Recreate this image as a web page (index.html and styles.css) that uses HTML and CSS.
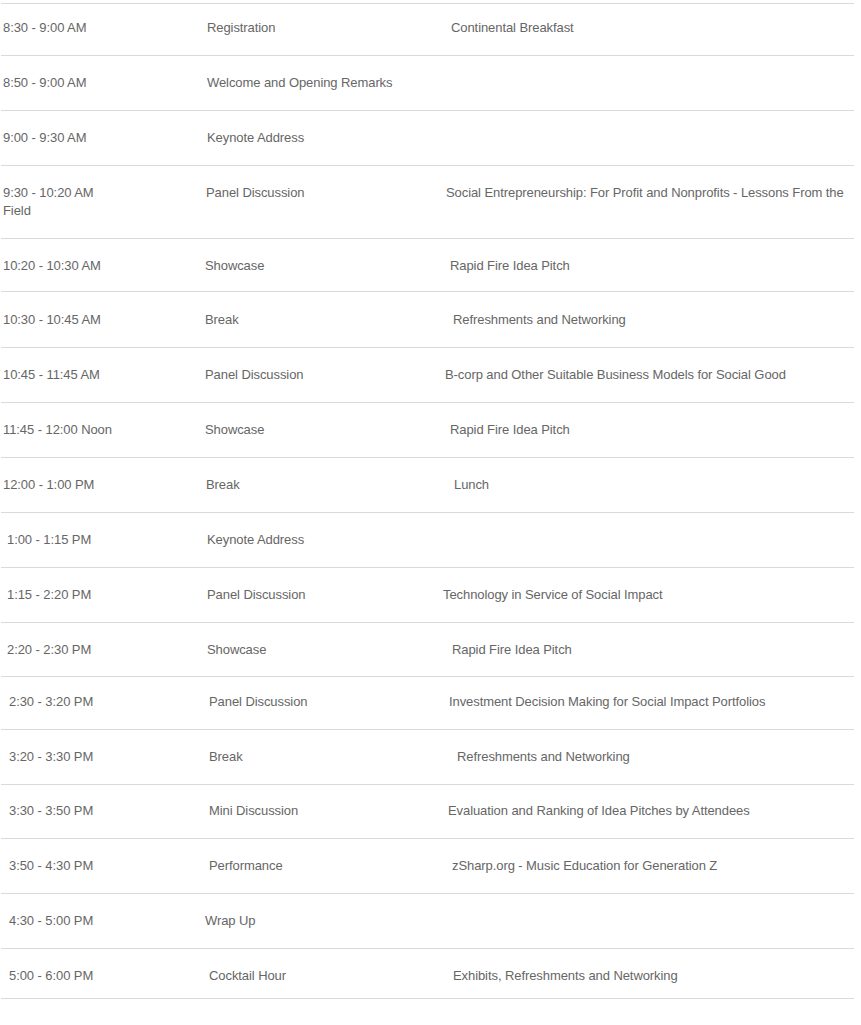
FILE: index.html
```html
<!DOCTYPE html>
<html lang="en">
<head>
<meta charset="utf-8">
<title>Schedule</title>
<link rel="stylesheet" href="styles.css">
</head>
<body>
<div class="schedule">
  <div class="row"><span class="time">8:30 - 9:00 AM</span><span class="track">Registration</span><span class="topic">Continental Breakfast</span></div>
  <div class="row"><span class="time">8:50 - 9:00 AM</span><span class="track">Welcome and Opening Remarks</span><span class="topic"></span></div>
  <div class="row"><span class="time">9:00 - 9:30 AM</span><span class="track">Keynote Address</span><span class="topic"></span></div>
  <div class="row"><span class="time">9:30 - 10:20 AM<br>Field</span><span class="track">Panel Discussion</span><span class="topic">Social Entrepreneurship: For Profit and Nonprofits - Lessons From the</span></div>
  <div class="row"><span class="time">10:20 - 10:30 AM</span><span class="track">Showcase</span><span class="topic">Rapid Fire Idea Pitch</span></div>
  <div class="row"><span class="time">10:30 - 10:45 AM</span><span class="track">Break</span><span class="topic">Refreshments and Networking</span></div>
  <div class="row"><span class="time">10:45 - 11:45 AM</span><span class="track">Panel Discussion</span><span class="topic">B-corp and Other Suitable Business Models for Social Good</span></div>
  <div class="row"><span class="time">11:45 - 12:00 Noon</span><span class="track">Showcase</span><span class="topic">Rapid Fire Idea Pitch</span></div>
  <div class="row"><span class="time">12:00 - 1:00 PM</span><span class="track">Break</span><span class="topic">Lunch</span></div>
  <div class="row"><span class="time">1:00 - 1:15 PM</span><span class="track">Keynote Address</span><span class="topic"></span></div>
  <div class="row"><span class="time">1:15 - 2:20 PM</span><span class="track">Panel Discussion</span><span class="topic">Technology in Service of Social Impact</span></div>
  <div class="row"><span class="time">2:20 - 2:30 PM</span><span class="track">Showcase</span><span class="topic">Rapid Fire Idea Pitch</span></div>
  <div class="row"><span class="time">2:30 - 3:20 PM</span><span class="track">Panel Discussion</span><span class="topic">Investment Decision Making for Social Impact Portfolios</span></div>
  <div class="row"><span class="time">3:20 - 3:30 PM</span><span class="track">Break</span><span class="topic">Refreshments and Networking</span></div>
  <div class="row"><span class="time">3:30 - 3:50 PM</span><span class="track">Mini Discussion</span><span class="topic">Evaluation and Ranking of Idea Pitches by Attendees</span></div>
  <div class="row"><span class="time">3:50 - 4:30 PM</span><span class="track">Performance</span><span class="topic">zSharp.org - Music Education for Generation Z</span></div>
  <div class="row"><span class="time">4:30 - 5:00 PM</span><span class="track">Wrap Up</span><span class="topic"></span></div>
  <div class="row"><span class="time">5:00 - 6:00 PM</span><span class="track">Cocktail Hour</span><span class="topic">Exhibits, Refreshments and Networking</span></div>
</div>
</body>
</html>
```

FILE: styles.css
```css
html, body {
  margin: 0;
  padding: 0;
  background: #ffffff;
}

body {
  font-family: "Liberation Sans", Arial, sans-serif;
  font-size: 13px;
  line-height: 18px;
  letter-spacing: -0.08px;
  color: #666666;
}

.schedule {
  margin-top: 3px;
  margin-left: 1px;
  width: 853px;
  border-bottom: 1px solid #dadada;
}

.row {
  box-sizing: border-box;
  display: grid;
  grid-template-columns: 202px 242px 1fr;
  height: 55px;
  padding-top: 18px;
  padding-left: 2px;
  border-top: 1px solid #dadada;
}

.time, .track, .topic {
  display: block;
  white-space: nowrap;
}

/* row heights */
.row:nth-child(1) { height: 52px; padding-top: 15px; }
.row:nth-child(4) { height: 73px; }
.row:nth-child(5) { height: 53px; }
.row:nth-child(6) { height: 56px; padding-top: 19px; }
.row:nth-child(12) { height: 54px; }
.row:nth-child(13) { height: 53px; padding-top: 16px; }
.row:nth-child(15) { height: 54px; padding-top: 17px; }
.row:nth-child(18) { height: 50px; }

/* column 1 offsets */
.row:nth-child(n+10) .time { padding-left: 4px; }
.row:nth-child(n+13) .time { padding-left: 6px; }

/* column 2 offsets (base x = 205) */
.row:nth-child(1) .track,
.row:nth-child(2) .track,
.row:nth-child(3) .track,
.row:nth-child(10) .track,
.row:nth-child(11) .track,
.row:nth-child(12) .track { padding-left: 2px; }
.row:nth-child(4) .track,
.row:nth-child(9) .track { padding-left: 1px; }
.row:nth-child(n+13) .track { padding-left: 4px; }
.row:nth-child(17) .track { padding-left: 0; }

/* column 3 offsets (base x = 447) */
.row:nth-child(1) .topic { padding-left: 4px; }
.row:nth-child(4) .topic { padding-left: 0; margin-left: -1px; }
.row:nth-child(5) .topic { padding-left: 3px; }
.row:nth-child(6) .topic { padding-left: 6px; }
.row:nth-child(7) .topic { margin-left: -2px; }
.row:nth-child(8) .topic { padding-left: 3px; }
.row:nth-child(9) .topic { padding-left: 7px; }
.row:nth-child(11) .topic { margin-left: -4px; }
.row:nth-child(12) .topic { padding-left: 5px; }
.row:nth-child(13) .topic { padding-left: 2px; }
.row:nth-child(14) .topic { padding-left: 10px; }
.row:nth-child(15) .topic { padding-left: 1px; }
.row:nth-child(16) .topic { padding-left: 5px; }
.row:nth-child(18) .topic { padding-left: 6px; }
```
